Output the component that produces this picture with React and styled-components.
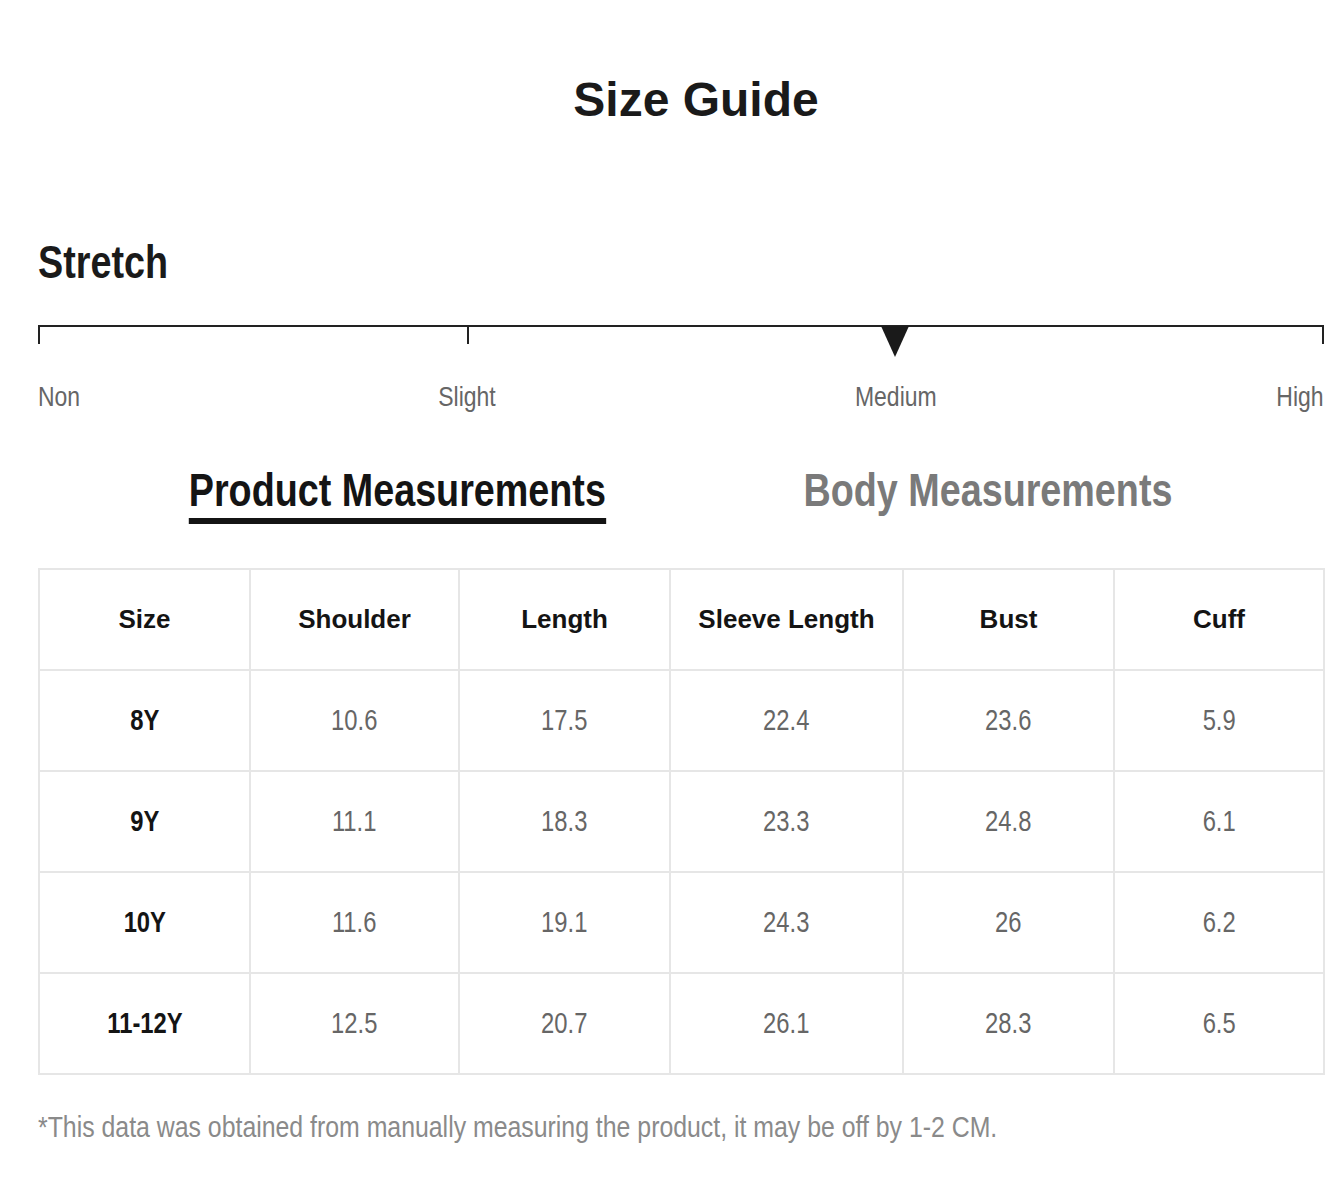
import styled, { createGlobalStyle } from 'styled-components';

const GlobalStyle = createGlobalStyle`
  body {
    margin: 0;
    background: #ffffff;
    font-family: "Liberation Sans", Arial, sans-serif;
  }
`;

const Page = styled.div`
  width: 1286px;
  padding: 76px 0 60px 38px;
`;

// the reference uses a narrow grotesque; squeeze Liberation Sans to match
const Narrow = styled.span`
  display: inline-block;
  transform: scaleX(0.82);
  transform-origin: ${p => p.$origin || 'center'};
  white-space: nowrap;
`;

const Title = styled.h1`
  margin: 0;
  padding-left: 30px;
  text-align: center;
  font-size: 48px;
  line-height: 1;
  font-weight: 700;
  color: #1a1a1a;
`;

const SectionHeading = styled.h2`
  margin: 115px 0 0;
  font-size: 46px;
  line-height: 1;
  font-weight: 700;
  color: #1a1a1a;
`;

const Track = styled.div`
  display: grid;
  grid-template-columns: repeat(3, 1fr);
  margin-top: 40px;
`;

const Segment = styled.div`
  position: relative;
  height: 19px;
  box-sizing: border-box;
  border-top: 2px solid #222;
  border-left: ${p => (p.$tickLeft ? '2px solid #222' : 'none')};
  border-right: ${p => (p.$tickRight ? '2px solid #222' : 'none')};
`;

const Marker = styled.svg`
  position: absolute;
  left: 0;
  top: -1px;
  transform: translateX(-50%);
`;

const Labels = styled.div`
  display: grid;
  grid-template-columns: repeat(6, 1fr);
  margin-top: 39px;
  font-size: 28px;
  line-height: 1;
  color: #666;
`;

const Label = styled.div`
  grid-column: ${p => p.$col};
  text-align: ${p => p.$align};
`;

const Tabs = styled.div`
  display: flex;
  justify-content: center;
  gap: 112px;
  margin-top: 56px;
  padding-right: 6px;
`;

const Tab = styled(Narrow)`
  font-size: 46px;
  line-height: 1;
  font-weight: 700;
  padding-bottom: 5px;
  color: ${p => (p.$active ? '#141414' : '#7a7a7a')};
  border-bottom: 6px solid ${p => (p.$active ? '#141414' : 'transparent')};
  cursor: pointer;
`;

const Table = styled.table`
  margin-top: 44px;
  width: 1285px;
  border-collapse: collapse;
  table-layout: fixed;
  border: 2px solid #e6e6e6;
`;

const Th = styled.th`
  height: 99px;
  padding: 0;
  border: 2px solid #e6e6e6;
  font-size: 26px;
  font-weight: 700;
  color: #141414;
  text-align: center;
  vertical-align: middle;
`;

const Td = styled.td`
  height: 99px;
  padding: 0;
  border: 2px solid #e6e6e6;
  font-size: 29px;
  line-height: 1;
  font-weight: ${p => (p.$strong ? 700 : 400)};
  color: ${p => (p.$strong ? '#141414' : '#666')};
  text-align: center;
  vertical-align: middle;
`;

const Note = styled.p`
  margin: 37px 0 0;
  font-size: 30.3px;
  line-height: 1;
  color: #8a8a8a;
`;

const columns = [
  { label: 'Size', width: 211 },
  { label: 'Shoulder', width: 209 },
  { label: 'Length', width: 211 },
  { label: 'Sleeve Length', width: 233 },
  { label: 'Bust', width: 211 },
  { label: 'Cuff', width: 210 },
];

const rows = [
  ['8Y', '10.6', '17.5', '22.4', '23.6', '5.9'],
  ['9Y', '11.1', '18.3', '23.3', '24.8', '6.1'],
  ['10Y', '11.6', '19.1', '24.3', '26', '6.2'],
  ['11-12Y', '12.5', '20.7', '26.1', '28.3', '6.5'],
];

export default function App() {
  return (
    <>
      <GlobalStyle />
      <Page>
        <Title>Size Guide</Title>

        <SectionHeading>
          <Narrow $origin="left">Stretch</Narrow>
        </SectionHeading>

        <Track>
          <Segment $tickLeft />
          <Segment $tickLeft />
          <Segment $tickRight>
            <Marker width="28" height="31" viewBox="0 0 28 31">
              <polygon points="0,0 28,0 14,31" fill="#1a1a1a" />
            </Marker>
          </Segment>
        </Track>

        <Labels>
          <Label $col="1" $align="left"><Narrow $origin="left">Non</Narrow></Label>
          <Label $col="2 / 4" $align="center"><Narrow>Slight</Narrow></Label>
          <Label $col="4 / 6" $align="center"><Narrow>Medium</Narrow></Label>
          <Label $col="6" $align="right"><Narrow $origin="right">High</Narrow></Label>
        </Labels>

        <Tabs>
          <Tab $active>Product Measurements</Tab>
          <Tab>Body Measurements</Tab>
        </Tabs>

        <Table>
          <colgroup>
            {columns.map(c => (
              <col key={c.label} style={{ width: c.width }} />
            ))}
          </colgroup>
          <thead>
            <tr>
              {columns.map(c => (
                <Th key={c.label}>{c.label}</Th>
              ))}
            </tr>
          </thead>
          <tbody>
            {rows.map(r => (
              <tr key={r[0]}>
                {r.map((v, i) => (
                  <Td key={i} $strong={i === 0}>
                    <Narrow>{v}</Narrow>
                  </Td>
                ))}
              </tr>
            ))}
          </tbody>
        </Table>

        <Note>
          <Narrow $origin="left">
            *This data was obtained from manually measuring the product, it may be off by 1-2 CM.
          </Narrow>
        </Note>
      </Page>
    </>
  );
}
